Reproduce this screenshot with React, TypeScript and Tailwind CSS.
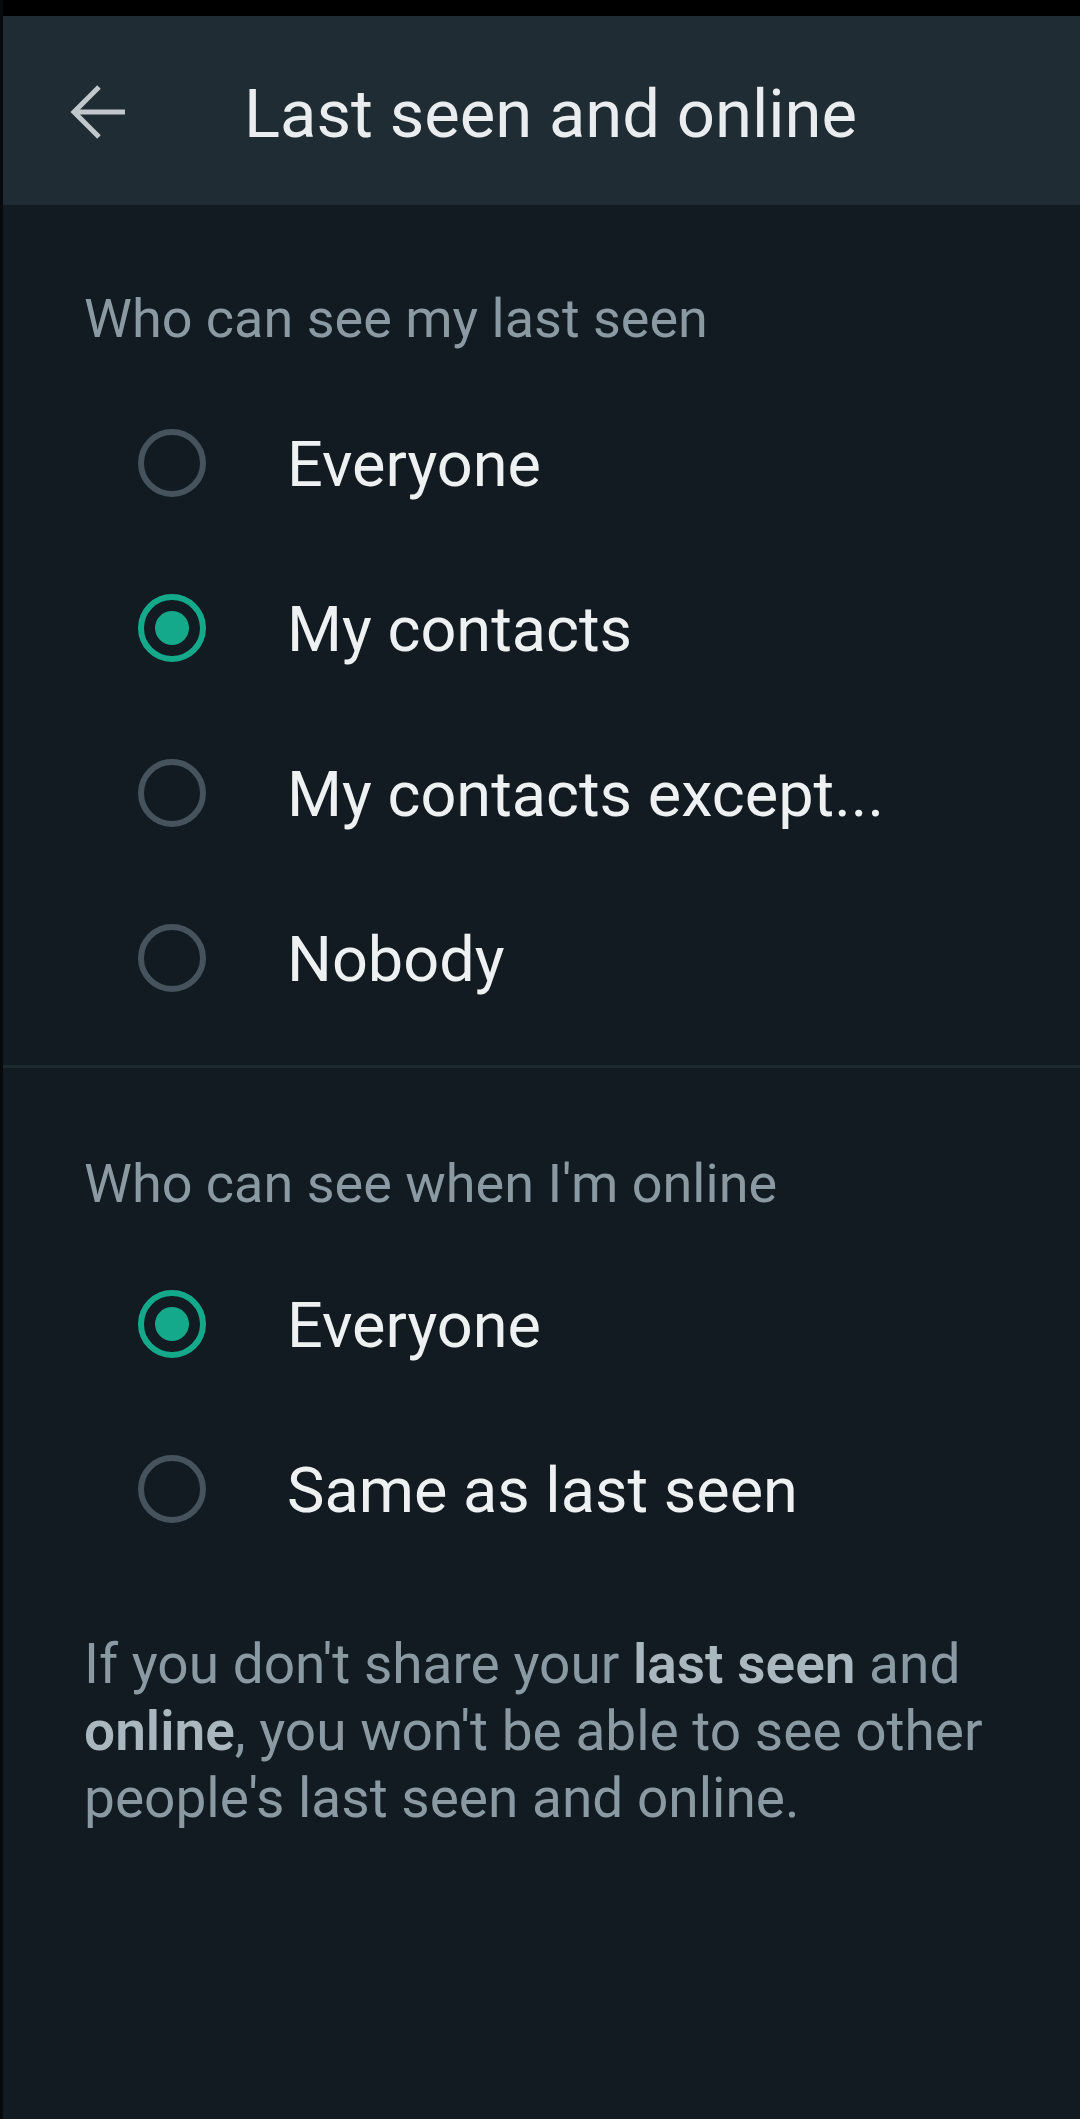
import React from 'react';

const font = { fontFamily: 'Roboto, "Noto Sans", sans-serif' };

function BackArrow() {
  return (
    <svg width="56" height="56" viewBox="0 0 56 56" fill="none" className="shrink-0">
      <path d="M55 27H4M29 2L4 27L29 52" stroke="#c1c8cd" strokeWidth="5" strokeLinejoin="miter" />
    </svg>
  );
}

function Radio({ checked }: { checked: boolean }) {
  if (checked) {
    return (
      <div className="w-[68px] h-[68px] rounded-full border-[6px] border-[#14a98a] flex items-center justify-center shrink-0">
        <div className="w-[34px] h-[34px] rounded-full bg-[#14a98a]" />
      </div>
    );
  }
  return <div className="w-[68px] h-[68px] rounded-full border-[6px] border-[#46535c] shrink-0" />;
}

function Option({ label, checked = false }: { label: string; checked?: boolean }) {
  return (
    <div className="h-[165px] flex items-center pl-[135px]">
      <Radio checked={checked} />
      <span className="ml-[81px] mt-[5px] text-[63px] leading-[80px] text-[#eef1f2]">{label}</span>
    </div>
  );
}

function SectionTitle({ children }: { children: React.ReactNode }) {
  return <div className="pl-[81px] h-[80px] leading-[80px] text-[54px] text-[#8a99a2]">{children}</div>;
}

export default function App() {
  return (
    <div className="w-[1080px] h-[2119px] bg-[#111b21] border-l-[3px] border-[#080b0d] flex flex-col" style={font}>
      <div className="h-[16px] bg-black shrink-0" />
      <header className="h-[189px] bg-[#202c33] flex items-center pl-[67px] pt-[4px] shrink-0">
        <BackArrow />
        <h1 className="ml-[118px] mt-[3px] text-[67px] leading-[80px] text-[#e9edef] font-normal">Last seen and online</h1>
      </header>

      <div className="mt-[74px]">
        <SectionTitle>Who can see my last seen</SectionTitle>
      </div>
      <div className="mt-[21px]">
        <Option label="Everyone" />
        <Option label="My contacts" checked />
        <Option label="My contacts except..." />
        <Option label="Nobody" />
      </div>

      <div className="mt-[25px] h-[3px] bg-[#1e2a31]" />

      <div className="mt-[76px]">
        <SectionTitle>Who can see when I'm online</SectionTitle>
      </div>
      <div className="mt-[17px]">
        <Option label="Everyone" checked />
        <Option label="Same as last seen" />
      </div>

      <p className="mt-[60px] pl-[81px] text-[55px] leading-[67px] text-[#8a99a2]">
        If you don't share your <span className="font-semibold text-[#abb7be]">last seen</span> and
        <br />
        <span className="font-semibold text-[#abb7be]">online</span>, you won't be able to see other
        <br />
        people's last seen and online.
      </p>
    </div>
  );
}
